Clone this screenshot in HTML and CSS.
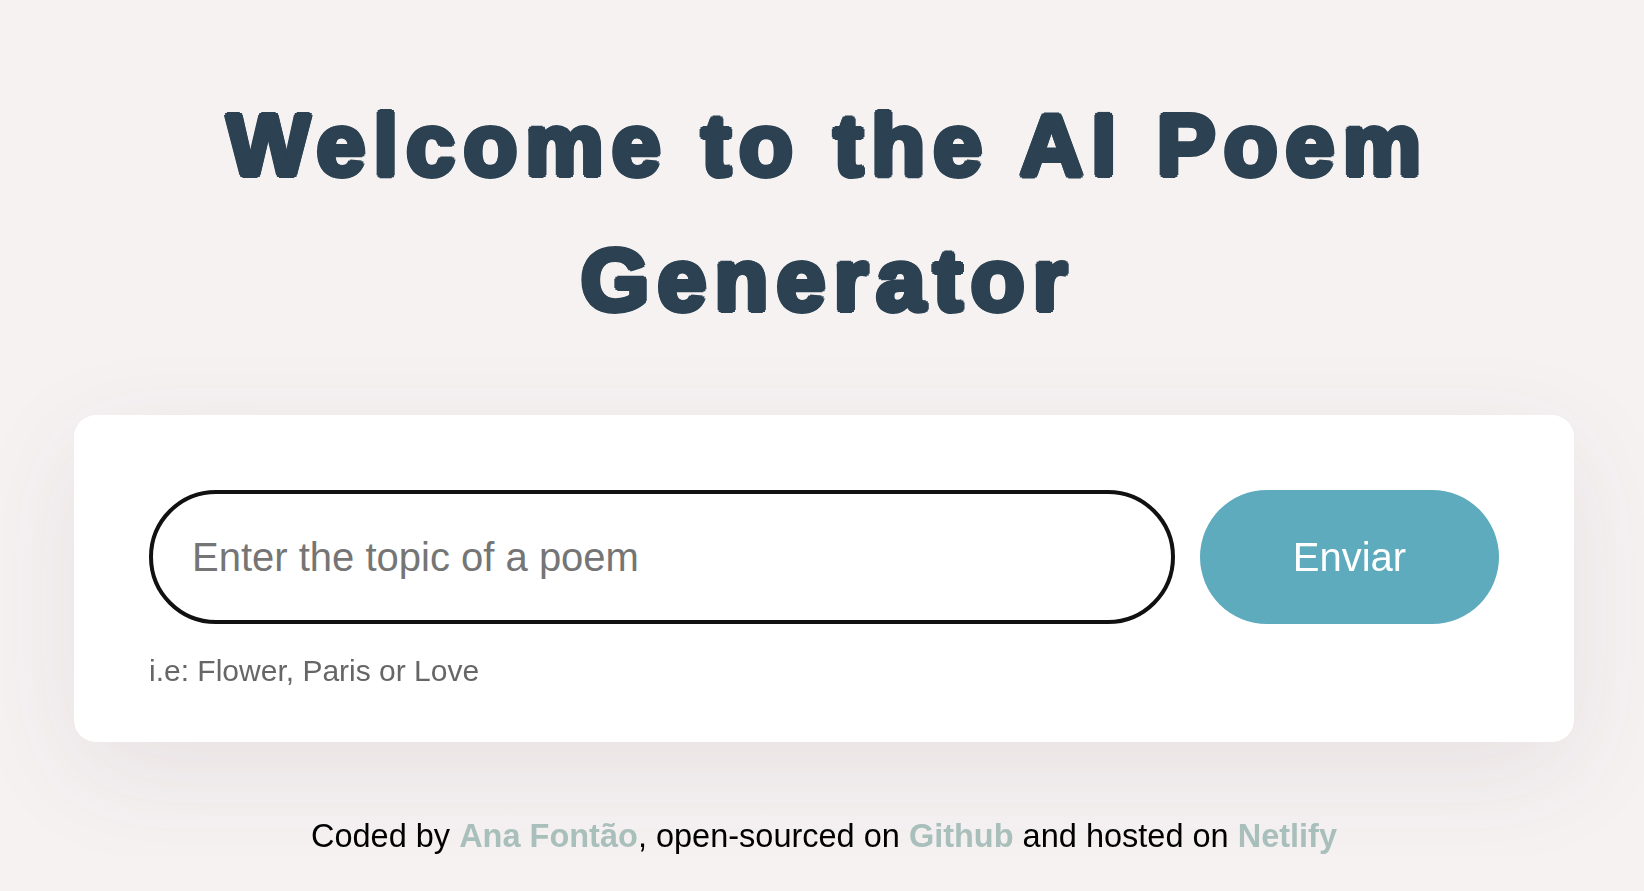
FILE: index.html
```html
<!DOCTYPE html>
<html lang="en">
<head>
<meta charset="utf-8">
<title>AI Poem Generator</title>
<link rel="stylesheet" href="styles.css">
</head>
<body>
<div class="page">
  <h1 class="title">Welcome to the AI Poem Generator</h1>
  <section class="card">
    <form class="form">
      <input class="topic" type="text" placeholder="Enter the topic of a poem" autofocus>
      <button class="send" type="button">Enviar</button>
    </form>
    <p class="hint">i.e: Flower, Paris or Love</p>
  </section>
  <footer class="footer">Coded by <a href="#">Ana Fontão</a>, open-sourced on <a href="#">Github</a> and hosted on <a href="#">Netlify</a></footer>
</div>
<script src="script.js"></script>
</body>
</html>
```

FILE: styles.css
```css
html, body {
  margin: 0;
  padding: 0;
}
body {
  background: #f6f2f2;
  font-family: "Liberation Sans", Arial, sans-serif;
  overflow: hidden;
}
.page {
  display: flex;
  flex-direction: column;
  align-items: center;
  padding-top: 77px;
  padding-left: 4px;
}
.title {
  margin: 0 0 0 8px;
  width: 1300px;
  text-align: center;
  font-family: "Liberation Sans", Arial, sans-serif;
  font-weight: 700;
  font-size: 88px;
  line-height: 135px;
  color: #2c4252;
  letter-spacing: 8.2px;
  text-shadow:
    3px 0 0 #2c4252, -3px 0 0 #2c4252,
    0 3px 0 #2c4252, 0 -3px 0 #2c4252,
    2.1px 2.1px 0 #2c4252, -2.1px 2.1px 0 #2c4252,
    2.1px -2.1px 0 #2c4252, -2.1px -2.1px 0 #2c4252,
    1.5px 0 0 #2c4252, -1.5px 0 0 #2c4252,
    0 1.5px 0 #2c4252, 0 -1.5px 0 #2c4252;
}
.card {
  box-sizing: border-box;
  width: 1500px;
  margin-top: 68px;
  background: #ffffff;
  border-radius: 22px;
  padding: 75px 75px 54px;
  box-shadow: 0 30px 110px rgba(90, 60, 75, 0.09);
}
.form {
  display: flex;
  gap: 25px;
  margin: 0;
}
.topic {
  box-sizing: border-box;
  flex: 1;
  height: 134px;
  border: 4px solid #111111;
  border-radius: 67px;
  padding: 0 39px;
  font-family: "Liberation Sans", Arial, sans-serif;
  font-size: 40px;
  color: #222;
  outline: none;
  caret-color: #2a2550;
}
.topic::placeholder {
  color: #757575;
}
.send {
  width: 299px;
  height: 134px;
  border: none;
  border-radius: 67px;
  background: #5eabbd;
  color: #ffffff;
  font-family: "Liberation Sans", Arial, sans-serif;
  font-size: 40px;
  cursor: pointer;
}
.hint {
  margin: 30px 0 0;
  font-size: 30px;
  line-height: 34px;
  color: #666666;
}
.footer {
  margin-top: 76px;
  font-size: 32.5px;
  line-height: 37px;
  color: #000000;
}
.footer a {
  color: #a9bfbb;
  font-weight: 700;
  text-decoration: none;
}
```

FILE: script.js
```js
document.querySelector('.topic').focus();
```
